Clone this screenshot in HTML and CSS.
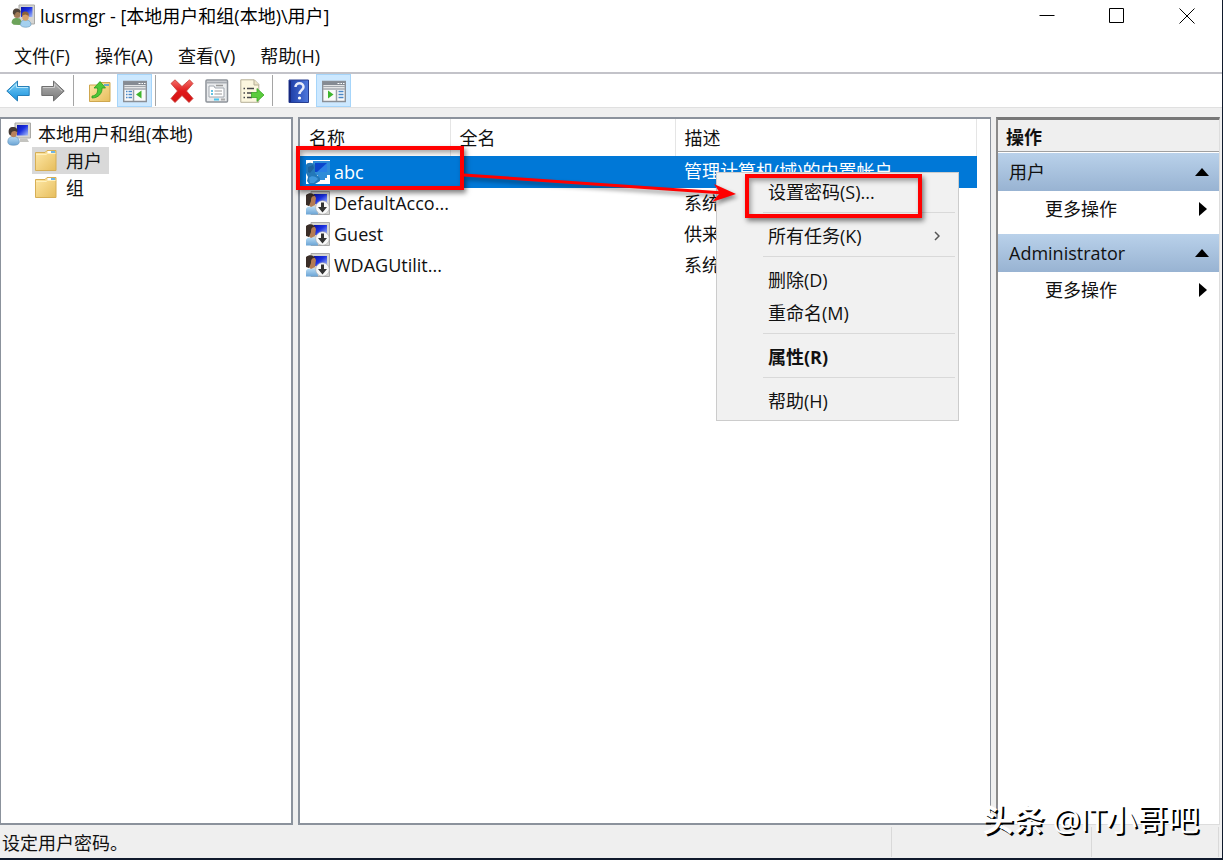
FILE: index.html
```html
<!DOCTYPE html>
<html lang="zh-CN">
<head>
<meta charset="utf-8">
<title>lusrmgr - [本地用户和组(本地)\用户]</title>
<link rel="stylesheet" href="styles.css">
</head>
<body>
<svg class="defs" aria-hidden="true">
  <defs>
    <linearGradient id="screen" x1="0" y1="0" x2="1" y2="1"><stop offset="0" stop-color="#0a12a8"/><stop offset=".45" stop-color="#1a2fe0"/><stop offset="1" stop-color="#a8c0fa"/></linearGradient>
    <linearGradient id="shirt" x1="0" y1="0" x2="0" y2="1"><stop offset="0" stop-color="#b8dcf5"/><stop offset="1" stop-color="#6aa3d4"/></linearGradient>
    <linearGradient id="gold" x1="0" y1="0" x2="1" y2="1"><stop offset="0" stop-color="#ffe9a8"/><stop offset="1" stop-color="#e6bd5c"/></linearGradient>
    <linearGradient id="blue" x1="0" y1="0" x2="0" y2="1"><stop offset="0" stop-color="#7fd0f7"/><stop offset="1" stop-color="#1690dc"/></linearGradient>
    <linearGradient id="gray" x1="0" y1="0" x2="0" y2="1"><stop offset="0" stop-color="#b5b5b5"/><stop offset="1" stop-color="#787878"/></linearGradient>
    <linearGradient id="red" x1="0" y1="0" x2="0" y2="1"><stop offset="0" stop-color="#f4706a"/><stop offset=".5" stop-color="#e0181a"/><stop offset="1" stop-color="#d41212"/></linearGradient>
    <linearGradient id="help" x1="0" y1="0" x2="1" y2="0"><stop offset="0" stop-color="#1b3ba5"/><stop offset="1" stop-color="#4f78dc"/></linearGradient>
  </defs>
  <symbol id="i-computer" viewBox="0 0 24 24">
    <path d="M8 1h15.500v15H8z" fill="#d5d5d2" stroke="#a9a9a6"/>
    <path d="M10 3h11v10.500H10z" fill="url(#screen)"/>
    <path d="M13 16.500h7l2 3.500h-9z" fill="#c4c4c0"/>
    <path d="M.8 20c0-4 2.500-5.500 5.500-5.500s6 1.500 6 5.500c0 2-2 3.300-5.800 3.300S.8 22 .8 20z" fill="url(#shirt)" stroke="#5d8eb8" stroke-width=".6"/>
    <ellipse cx="6.500" cy="10.500" rx="3.700" ry="4.800" fill="#b8835c"/>
    <path d="M2 12C.5 6 4 4.500 7 5c3 .5 4 3 3 5-2-2-5-1-5.500.5S4 15 2 12z" fill="#453a34"/>
  </symbol>
  <symbol id="i-users" viewBox="0 0 24 24">
    <path d="M8 1h15.500v19H8z" fill="#d5d5d2" stroke="#a9a9a6"/>
    <path d="M10 3h11.500v10H10z" fill="url(#screen)"/>
    <path d="M.6 19c0-4 2.500-5 5-5s5 1 5 5l-2 2-6-.3z" fill="#6da35a"/>
    <ellipse cx="6" cy="9.500" rx="3.500" ry="4.500" fill="#a27b58"/>
    <path d="M2 10C1 5 5 3.800 7.500 5s2.500 3 1.500 4C7 7 4 8 4 11z" fill="#51453b"/>
    <path d="M9.500 21c0-4 2.200-5 5-5s5.500 1 5.500 5c-1 3-9.500 3-10.500 0z" fill="#a4d0ef" stroke="#6595ba" stroke-width=".6"/>
    <ellipse cx="14.500" cy="12.500" rx="3.300" ry="4.300" fill="#d5a06a"/>
    <path d="M11 12c-.5-4 2-5 4-4.500s3.500 2.500 2.500 4.500c-2-2-4.500-2-6.500 0z" fill="#8a6238"/>
  </symbol>
  <symbol id="i-selected" viewBox="0 0 24 24">
    <path d="M7 1h17v14h-3v3h-2v2h-7v-5H7z" fill="#2f8cd8"/>
    <path d="M9 3h12v9H9z" fill="#0b46cc"/>
    <path d="M11 12l10-9v9z" fill="#2a80e5"/>
    <path d="M0 5c1-3 7-3 9 0v8l5 5v3l-5 3H3l-2-3 1-4-2-4z" fill="#2378b8"/>
    <path d="M3 18c2-3 7-2 9 1l-4 4H4z" fill="#3f98dc"/>
    <path d="M2 7l5-2 1 3-4 5-2-1z" fill="#1d639d"/>
  </symbol>
  <symbol id="i-disabled" viewBox="0 0 24 24">
    <path d="M5 .5h18.500v23H5z" fill="#d5d5d2" stroke="#aaa"/>
    <path d="M8 3h13v10H8z" fill="url(#screen)"/>
    <path d="M0 23.500v-6c2-3 10-3 12 1v5z" fill="url(#shirt)"/>
    <path d="M1 5c3-3 8-2 9 2l-1 7-4 2-4-3z" fill="#b47b53"/>
    <path d="M0 14V4c3-3 8-2 9 1-3 0-4 1-4 5l-2 5z" fill="#3a2d27"/>
    <circle cx="16.500" cy="16.500" r="6.800" fill="#f8f8f8" stroke="#aaa" stroke-width=".6"/>
    <path d="M15 11.500h3v4.500h3L16.500 21.500 12 16h3z" fill="#333"/>
  </symbol>
  <symbol id="i-folder" viewBox="0 0 24 24">
    <path d="M1.500 3.500h9.500l2-2h9v20h-20.500z" fill="url(#gold)" stroke="#d6ae55"/>
    <path d="M13.500 3h7.500" stroke="#fff" stroke-width="2"/><path d="M17 3h4" stroke="#3d9cdf" stroke-width="1.500"/>
    <path d="M2 5.500h10l1.500-1h8" fill="none" stroke="#fff0bc"/>
  </symbol>
  <symbol id="i-console" viewBox="0 0 24 24">
    <path d="M.7 2.500h22.600v20H.7z" fill="#fafafa" stroke="#8a8f96" stroke-width="1.400"/>
    <path d="M1 3h22v3H1z" fill="#858b93"/><path d="M1 7.500h22M1 10h22" stroke="#a2a7ad" stroke-width="1.500"/>
    <path d="M15.500 4.500h2M18.500 4.500h1.500M21 4.500h1.500" stroke="#fff"/>
  </symbol>
</svg>

<div class="window">
  <header class="titlebar">
    <svg class="icon"><use href="#i-users"/></svg>
    <h1 class="title">lusrmgr - [本地用户和组(本地)\用户]</h1>
    <button class="caption" aria-label="最小化"><svg class="glyph" viewBox="0 0 16 16"><path d="M.5 7.500h15"/></svg></button>
    <button class="caption" aria-label="最大化"><svg class="glyph" viewBox="0 0 16 16"><path d="M.5.5h14v14H.5z"/></svg></button>
    <button class="caption" aria-label="关闭"><svg class="glyph" viewBox="0 0 16 16"><path d="M.5.5l15 15M15.500.5l-15 15"/></svg></button>
  </header>

  <nav class="menubar">
    <button class="menu-title">文件(F)</button>
    <button class="menu-title">操作(A)</button>
    <button class="menu-title">查看(V)</button>
    <button class="menu-title">帮助(H)</button>
  </nav>

  <div class="toolbar">
    <button class="tool" aria-label="后退"><svg class="icon" viewBox="0 0 24 24"><path d="M.8 12L11.500 2v5.500h11.700v9H11.500V22z" fill="url(#blue)" stroke="#277fb8"/><path d="M3 12l7.500-7v3.500H22" fill="none" stroke="#b8e8fc"/></svg></button>
    <button class="tool" aria-label="前进"><svg class="icon" viewBox="0 0 24 24"><path d="M23.200 12L12.500 2v5.500H.8v9h11.700V22z" fill="url(#gray)" stroke="#707070"/><path d="M2 8.500h11.500V5l7.500 7" fill="none" stroke="#ccc"/></svg></button>
    <span class="divider"></span>
    <button class="tool" aria-label="上一级"><svg class="icon" viewBox="0 0 24 24"><path d="M1.500 6h8l2-2.500h10.500v19h-20.500z" fill="url(#gold)" stroke="#cfa74f"/><path d="M16 6h5" stroke="#3d9cdf" stroke-width="1.500"/><path d="M4 17c5-.5 6-4 5.500-8H6l6-6.500L17.500 9H14c.5 5-3.500 10-10 10z" fill="#4cc838" stroke="#289a1e" stroke-width=".8"/></svg></button>
    <button class="tool pressed" aria-label="显示/隐藏控制台树"><svg class="icon" viewBox="0 0 24 24"><use href="#i-console"/><path d="M10.500 11v11" stroke="#9aa0a6" stroke-width="1.500"/><path d="M3 12.500h1.500M5.500 12.500H9M3 15.500h1.500M5.500 15.500H9M3 18.500h1.500M5.500 18.500H9" stroke="#4a88c8" stroke-width="1.500"/><path d="M18.500 11.500v8L13 15.500z" fill="#3fb52e"/></svg></button>
    <span class="divider"></span>
    <button class="tool" aria-label="删除"><svg class="icon" viewBox="0 0 24 24"><path d="M1 4.500L5 .8 12 7.500 19.500.8 23 4.500 16.500 12l6.500 7.500-4 4L12 16.500 5 23.500l-4-4L7.500 12z" fill="url(#red)" stroke="#c43a34" stroke-width=".8"/></svg></button>
    <button class="tool" aria-label="属性"><svg class="icon" viewBox="0 0 24 24"><rect x="1" y="1" width="21.500" height="22" rx="1" fill="#e9ebed" stroke="#8d9299" stroke-width="1.500"/><path d="M2 3.500h20" stroke="#a8adb3" stroke-width="2"/><path d="M4 7h5l1 2h9v9H4z" fill="#fff" stroke="#a1a7ae"/><path d="M11 6.500h7" stroke="#999" stroke-width="1.500"/><path d="M6 12h2M6 15h2" stroke="#31afd8" stroke-width="1.500"/><path d="M9.500 12H17M9.500 15H17" stroke="#999"/><path d="M9 20.500h5" stroke="#4ac6ee" stroke-width="2"/><path d="M16 20.500h4" stroke="#aaa" stroke-width="2"/></svg></button>
    <button class="tool" aria-label="导出列表"><svg class="icon" viewBox="0 0 24 24"><path d="M.8.8h13.500l4.500 4.500v18H.8z" fill="#fcf7df" stroke="#b5ae96"/><path d="M14 1v5h5" fill="#eee6c8" stroke="#b5ae96"/><path d="M3.500 9.500H5M3.500 14H5M3.500 18.500H5M7 9.500h7M7 14h5M7 18.500h5" stroke="#45464a" stroke-width="1.500"/><path d="M11.500 13.500H17V9.500l7 6.500-7 6.500v-4h-5.500z" fill="#5bcc3d" stroke="#39a527" stroke-width=".8"/></svg></button>
    <span class="divider"></span>
    <button class="tool" aria-label="帮助"><svg class="icon" viewBox="0 0 24 24"><path d="M2 1h19.500v22.500H2z" fill="url(#help)" stroke="#263d91"/><path d="M3 2v21" stroke="#17297f" stroke-width="2"/><path d="M8.500 8c0-5 8-5 8 0 0 3-4 3.500-4 7" fill="none" stroke="#e8ecfa" stroke-width="2.500"/><circle cx="12.500" cy="19" r="1.600" fill="#fff"/></svg></button>
    <button class="tool pressed" aria-label="显示/隐藏操作窗格"><svg class="icon" viewBox="0 0 24 24"><use href="#i-console"/><path d="M14.500 11v11" stroke="#9aa0a6" stroke-width="1.500"/><path d="M16.500 12.500h5M16.500 15.500h5M16.500 18.500h5" stroke="#4a88c8" stroke-width="1.500"/><path d="M6 11.500v8l5.500-4z" fill="#3fb52e"/></svg></button>
  </div>

  <main class="panes">
    <section class="pane tree">
      <div class="node"><svg class="icon"><use href="#i-computer"/></svg>本地用户和组(本地)</div>
      <ul class="children">
        <li class="leaf current"><svg class="icon"><use href="#i-folder"/></svg>用户</li>
        <li class="leaf"><svg class="icon"><use href="#i-folder"/></svg>组</li>
      </ul>
    </section>

    <section class="pane list">
      <table class="users">
        <colgroup><col class="c-name"><col class="c-full"><col></colgroup>
        <thead><tr><th>名称</th><th>全名</th><th>描述</th></tr></thead>
        <tbody>
          <tr class="selected"><td><span class="user"><svg class="icon"><use href="#i-selected"/></svg>abc</span></td><td></td><td>管理计算机(域)的内置帐户</td></tr>
          <tr><td><span class="user"><svg class="icon"><use href="#i-disabled"/></svg>DefaultAcco...</span></td><td></td><td>系统</td></tr>
          <tr><td><span class="user"><svg class="icon"><use href="#i-disabled"/></svg>Guest</span></td><td></td><td>供来</td></tr>
          <tr><td><span class="user"><svg class="icon"><use href="#i-disabled"/></svg>WDAGUtilit...</span></td><td></td><td>系统</td></tr>
        </tbody>
      </table>

      <div class="context">
        <button class="entry">设置密码(S)...</button>
        <hr class="rule">
        <button class="entry">所有任务(K)<svg class="chevron" viewBox="0 0 6 10"><path d="M1 1l4 4-4 4"/></svg></button>
        <hr class="rule">
        <button class="entry">删除(D)</button>
        <button class="entry">重命名(M)</button>
        <hr class="rule">
        <button class="entry strong">属性(R)</button>
        <hr class="rule">
        <button class="entry">帮助(H)</button>
      </div>

      <div class="mark mark-user"></div>
      <div class="mark mark-entry"></div>
      <svg class="arrow" viewBox="0 0 274 30"><path d="M0 4L260 22" stroke="#f00" stroke-width="3"/><path d="M250 13l22 10-24 8 8-9z" fill="#f00"/></svg>
    </section>

    <aside class="actions">
      <h2 class="actions-title">操作</h2>
      <div class="group">
        <button class="group-head">用户<svg class="up" viewBox="0 0 14 8"><path d="M0 8l7-8 7 8z"/></svg></button>
        <button class="more">更多操作<svg class="right" viewBox="0 0 8 14"><path d="M0 0l8 7-8 7z"/></svg></button>
      </div>
      <div class="group">
        <button class="group-head">Administrator<svg class="up" viewBox="0 0 14 8"><path d="M0 8l7-8 7 8z"/></svg></button>
        <button class="more">更多操作<svg class="right" viewBox="0 0 8 14"><path d="M0 0l8 7-8 7z"/></svg></button>
      </div>
    </aside>
  </main>

  <footer class="status">
    <span class="status-text">设定用户密码。</span>
    <span class="status-cell"></span>
    <span class="status-cell narrow"></span>
  </footer>
  <div class="watermark"><b class="brand">头条</b> @IT小哥吧</div>
</div>
</body>
</html>
```

FILE: styles.css
```css
* { box-sizing: border-box; }

body {
  margin: 0;
  font: 18px/26px "Open Sans", "Noto Sans CJK SC", sans-serif;
  color: #111;
}

button {
  margin: 0;
  padding: 0;
  border: 0;
  background: none;
  font: inherit;
  color: inherit;
  text-align: left;
}

.defs { position: absolute; width: 0; height: 0; }
.icon { width: 24px; height: 24px; flex: none; display: block; }

.window {
  position: relative;
  display: flex;
  flex-direction: column;
  min-height: 100vh;
  background: #efefef;
  border-right: 1px solid #101a2c;
  border-bottom: 2px solid #101a2c;
}

.titlebar {
  display: flex;
  align-items: center;
  height: 31px;
  padding-left: 11px;
  background: #fff;
}
.title { flex: 1; margin: 0; padding-left: 5px; font-size: 18px; line-height: 26px; font-weight: 400; color: #000; }
.caption { display: flex; justify-content: center; align-items: center; width: 70px; height: 32px; }
.glyph { width: 16px; height: 16px; fill: none; stroke: #000; stroke-width: 1; }

.menubar {
  display: flex;
  gap: 25px;
  height: 43px;
  padding: 12px 14px 3px;
  background: #fff;
  border-bottom: 2px solid #c3c3c9;
}

.toolbar {
  display: flex;
  align-items: center;
  height: 34px;
  background: #fff;
  border-bottom: 1px solid #e0e0e0;
}
.tool { display: flex; justify-content: center; align-items: center; width: 35px; height: 33px; }
.pressed { background: #cce8ff; border: 1px solid #a6d5fa; }
.divider { width: 1px; height: 31px; margin: 0 8px 0 3px; background: #a5a5a5; }

.panes { flex: 1; display: flex; padding: 9px 2px 0 0; }
.pane { background: #fff; border: 2px solid #8b929c; }

.tree { width: 293px; border-left-width: 1px; padding-top: 1px; }
.node { display: flex; align-items: center; gap: 7px; height: 27px; padding-left: 6px; }
.children { margin: 0; padding: 0 0 0 31px; list-style: none; }
.leaf { display: flex; align-items: center; gap: 8px; width: 77px; height: 27px; padding-left: 2px; }
.current { background: #d9d9d9; }

.list { position: relative; flex: 1; margin: 0 5px; padding-right: 13px; border-right-width: 1px; }
.users { width: 100%; table-layout: fixed; border-collapse: collapse; }
.c-name { width: 150px; }
.c-full { width: 225px; }
.users th {
  height: 37px;
  padding: 1px 9px 0;
  border-right: 1px solid #e5e5e5;
  font-weight: 400;
  text-align: left;
}
.users td { height: 31px; padding: 0 9px 2px; white-space: nowrap; }
.users td:first-child { padding: 0 0 1px 6px; }
.users .selected td { height: 32px; background: #0078d7; color: #fff; }
.user { display: flex; align-items: center; gap: 4px; }
.selected .icon { background: #fff; }

.context {
  position: absolute;
  left: 416px;
  top: 53px;
  width: 243px;
  padding: 3px 3px 2px 2px;
  background: #f1f1f1;
  border: 1px solid #ccc;
}
.entry {
  display: flex;
  align-items: center;
  justify-content: space-between;
  width: 100%;
  height: 33px;
  padding: 0 15px 2px 49px;
}
.strong { font-weight: 700; }
.rule { height: 1px; margin: 3px 0 7px 44px; border: 0; background: #d9d9d9; }
.chevron { width: 6px; height: 10px; fill: none; stroke: #555; stroke-width: 1.5; }

.mark {
  position: absolute;
  height: 44px;
  border: 4px solid #f00;
  box-shadow: 2px 3px 5px rgba(0, 0, 0, .5), inset 2px 3px 5px rgba(0, 0, 0, .35);
}
.mark-user { left: -4px; top: 27px; width: 168px; }
.mark-entry { left: 445px; top: 55px; width: 177px; }
.arrow {
  position: absolute;
  left: 164px;
  top: 52px;
  width: 274px;
  height: 30px;
  overflow: visible;
  fill: none;
  filter: drop-shadow(2px 3px 2px rgba(0, 0, 0, .45));
}

.actions {
  width: 224px;
  background: #fff;
  border: solid #8a8a8a;
  border-width: 3px 1px 1px 2px;
  border-right-color: #ddd;
  border-bottom-color: #ddd;
  border-top-color: #777;
}
.actions-title {
  height: 32px;
  margin: 0 0 1px;
  padding: 4px 8px 0;
  background: #efefef;
  border-bottom: 1px solid #a0a0a0;
  font-size: 18px;
  line-height: 26px;
}
.group { margin-bottom: 7px; }
.group-head,
.more { display: flex; align-items: center; justify-content: space-between; width: 100%; }
.group-head { height: 38px; padding: 0 10px 0 11px; background: linear-gradient(#b9d1ea, #98b3d2); }
.more { height: 36px; padding: 0 12px 0 47px; }
.up { width: 14px; height: 8px; fill: #000; }
.right { width: 8px; height: 14px; fill: #000; }

.status { display: flex; height: 33px; padding: 2px 3px 1px 2px; }
.status-text { flex: 1; padding-top: 3px; }
.status-cell { width: 200px; border-left: 1px solid #d9d9d9; }
.narrow { width: 128px; border-right: 1px solid #d9d9d9; }

.watermark {
  position: absolute;
  right: 23px;
  bottom: 19px;
  font-size: 31px;
  line-height: 40px;
  color: #fff;
  white-space: nowrap;
  text-shadow: 2px 2px 0 #000;
}
.brand { font-weight: 700; }
```
